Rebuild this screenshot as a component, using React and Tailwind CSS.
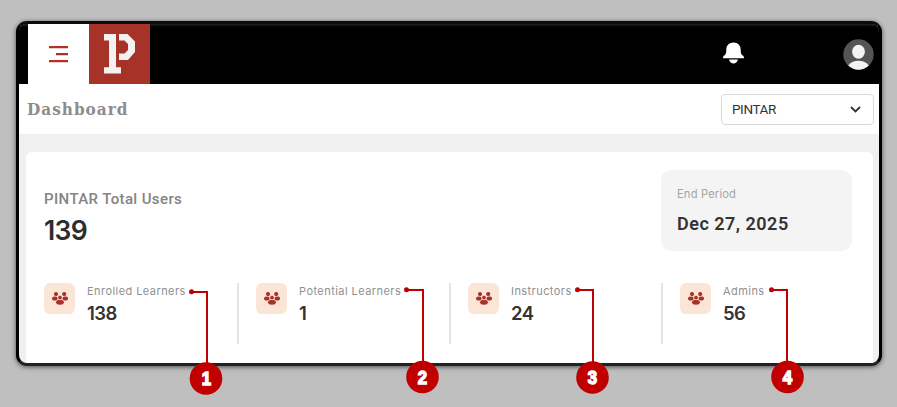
const STATS = [
  { label: 'Enrolled Learners', value: '138', box: 'w-[193px]' },
  { label: 'Potential Learners', value: '1', box: 'w-[212px] border-l-2 pl-[17px]' },
  { label: 'Instructors', value: '24', box: 'w-[212px] border-l-2 pl-[17px]' },
  { label: 'Admins', value: '56', box: 'w-[190px] border-l-2 pl-[17px]' },
];

const CALLOUTS = [
  { n: '1', dotX: 191.5, y: 292, x: 207, cx: 206, cy: 378.5 },
  { n: '2', dotX: 406.5, y: 290, x: 423, cx: 422.5, cy: 377 },
  { n: '3', dotX: 577.5, y: 290, x: 593, cx: 592.5, cy: 377.5 },
  { n: '4', dotX: 771.5, y: 290, x: 787, cx: 787.5, cy: 377 },
];

function PeopleIcon() {
  return (
    <svg width="16" height="13" viewBox="0 0 16 13" fill="#a8322a">
      <circle cx="4" cy="2.1" r="2.1" />
      <circle cx="12.2" cy="2.1" r="2.1" />
      <ellipse cx="2.8" cy="6.5" rx="2.8" ry="2.1" />
      <ellipse cx="13.3" cy="6.5" rx="2.8" ry="2.1" />
      <ellipse cx="8" cy="10.3" rx="3.9" ry="2.5" />
      <circle cx="8" cy="5.6" r="2.2" stroke="#fbe5d6" strokeWidth="0.6" />
    </svg>
  );
}

function Header() {
  return (
    <header className="flex h-[60px] shrink-0 items-center bg-black bg-linear-to-b from-[#222] from-0% to-black to-[8%]">
      <div className="ml-[9px] flex h-[60px] w-[61px] items-center justify-center bg-white">
        <svg width="19" height="17" viewBox="0 0 19 17" stroke="#b23028" strokeWidth="2.2">
          <path d="M0 1.2H19M7 8.2H19M0 15.2H19" />
        </svg>
      </div>
      <div className="flex h-[60px] w-[61px] items-center justify-center bg-[#a63228]">
        <svg width="31" height="40" viewBox="0 0 31 40" fill="#f3f1f1">
          <path d="M0 0H12V33.3H17V39.5H0V33.3H5V6.5H0Z" />
          <path d="M15 0H23.5L31 7.5V18L24 26H15V19.5H20.5L24 16V10L20.5 6.5H15Z" />
        </svg>
      </div>
      <svg className="-mt-[3px] ml-[573px]" width="21" height="22" viewBox="0 0 21 23" fill="#fff" preserveAspectRatio="none">
        <path d="M10.5 .5C6 .5 3.3 3.8 3.3 8C3.3 12 2.6 13 .7 14.5Q0 15.2 0 17H21Q21 15.2 20.3 14.5C18.4 13 17.7 12 17.7 8C17.7 3.8 15 .5 10.5 .5Z" />
        <path d="M6 18.2H15C14.3 21 12.5 22.5 10.5 22.5S6.7 21 6 18.2Z" />
      </svg>
      <svg className="ml-[99px]" width="31" height="31" viewBox="0 0 31 31">
        <circle cx="15.5" cy="15.5" r="15.2" fill="#545454" />
        <ellipse cx="15.5" cy="12.8" rx="6.4" ry="7" fill="#f3f3f3" />
        <path d="M5.2 26.5C8 23 11.5 21.8 15.5 21.8S23 23 25.8 26.5C22.8 29.3 19 30.7 15.5 30.7S8.2 29.3 5.2 26.5Z" fill="#f3f3f3" />
      </svg>
    </header>
  );
}

function Callout({ n, dotX, y, x, cx, cy }) {
  return (
    <>
      <svg className="absolute left-0 top-0" width="897" height="407" viewBox="0 0 897 407">
        <path d={`M${dotX} ${y}H${x}V${cy}`} fill="none" stroke="#c00000" strokeWidth="2" />
        <circle cx={dotX} cy={y - 0.2} r="2.5" fill="#c00000" />
        <circle cx={cx} cy={cy} r="16.3" fill="#c00000" />
      </svg>
      <span
        className="absolute flex h-8 w-8 items-center justify-center font-['Liberation_Sans',sans-serif] text-[19px] leading-none font-bold text-white [-webkit-text-stroke:1.5px_white]"
        style={{ left: cx - 16, top: cy - 16 }}
      >
        <span className="scale-x-[0.88]">{n}</span>
      </span>
    </>
  );
}

export default function App() {
  return (
    <div className="relative h-[407px] w-[897px] overflow-hidden bg-[#bfbfbf] pt-[21px] pl-4 font-['Roboto',sans-serif]">
      <div className="flex h-[345px] w-[866px] flex-col overflow-hidden rounded-[11px] border-[3px] border-t-[#0c0c0c] border-r-black border-b-[#222] border-l-black bg-[#f1f0ef] shadow-[0_1px_5px_rgba(0,0,0,0.6)]">
        <Header />
        <div className="flex h-[50px] shrink-0 items-center justify-between bg-white pr-[5px] pl-2">
          <h1 className="font-['DejaVu_Serif_Condensed','DejaVu_Serif',serif] text-[17px] leading-none font-bold tracking-[1px] text-[#8c8c8c]">Dashboard</h1>
          <div className="flex h-[31px] w-[153px] items-center justify-between rounded-[4px] border border-[#d9d9d9] pr-3 pl-[10px] text-[13.5px] tracking-[-0.4px] text-[#333]">
            <span>PINTAR</span>
            <svg width="11" height="7" viewBox="0 0 11 7" fill="none" stroke="#333" strokeWidth="1.8">
              <path d="M1 1L5.5 5.5L10 1" />
            </svg>
          </div>
        </div>
        <main className="mr-[6px] ml-[7px] mt-[18px] flex-1 rounded-t-[6px] bg-white pt-[18px]">
          <div className="flex h-[81px] justify-between pr-[21px] pl-[18px]">
            <div className="pt-[19px]">
              <div className="text-[15px] leading-[20px] font-medium tracking-[0.38px] text-[#848484]">PINTAR Total Users</div>
              <div className="mt-[6px] font-['Inter',sans-serif] text-[26.5px] leading-[30px] font-semibold tracking-[-0.6px] text-[#2d2d2d]">139</div>
            </div>
            <div className="w-[191px] rounded-[10px] bg-[#f4f4f4] pt-4 pl-4">
              <div className="font-['Inter',sans-serif] text-[11.2px] leading-[16px] tracking-[0.15px] text-[#a5a5a5]">End Period</div>
              <div className="mt-[10px] text-[18px] leading-[24px] font-semibold tracking-[0.5px] text-[#333]">Dec 27, 2025</div>
            </div>
          </div>
          <div className="mt-[32px] flex pl-[18px]">
            {STATS.map((s) => (
              <div key={s.label} className={`flex h-[61px] shrink-0 border-[#e3e3e3] ${s.box}`}>
                <div className="flex h-[31px] w-[31px] shrink-0 items-center justify-center rounded-[6px] bg-[#fbe5d6]">
                  <PeopleIcon />
                </div>
                <div className="ml-3">
                  <div className="pt-px font-['Inter',sans-serif] text-[11px] leading-[15px] tracking-[0.44px] whitespace-nowrap text-[#909090]">{s.label}</div>
                  <div className="mt-[2px] font-['Inter',sans-serif] text-[18.5px] leading-[24px] font-semibold tracking-[-0.6px] text-[#333]">{s.value}</div>
                </div>
              </div>
            ))}
          </div>
        </main>
      </div>
      {CALLOUTS.map((c) => (
        <Callout key={c.n} {...c} />
      ))}
    </div>
  );
}
